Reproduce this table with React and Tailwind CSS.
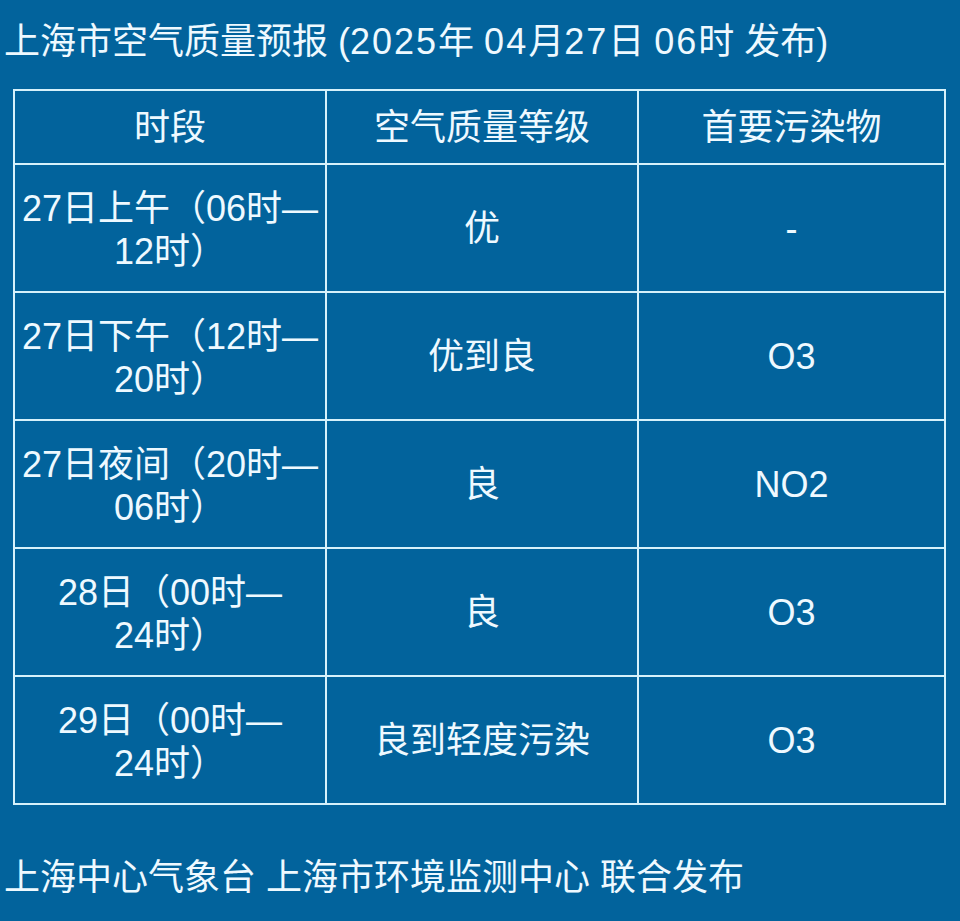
const rows = [
  { period: ['27日上午（06时—', '12时）'], level: '优', pollutant: '-' },
  { period: ['27日下午（12时—', '20时）'], level: '优到良', pollutant: 'O3' },
  { period: ['27日夜间（20时—', '06时）'], level: '良', pollutant: 'NO2' },
  { period: ['28日（00时—', '24时）'], level: '良', pollutant: 'O3' },
  { period: ['29日（00时—', '24时）'], level: '良到轻度污染', pollutant: 'O3' },
];

const cell = 'border-2 border-[#d6f1fb] font-normal text-center';

export default function App() {
  return (
    <div className="min-h-screen bg-[#02639c] text-[#eef9ff] font-['Liberation_Sans','Noto_Sans_CJK_SC',sans-serif] text-[36px] leading-[43px]">
      <div className="pt-5 pl-1 whitespace-nowrap">
        上海市空气质量预报 (<span className="tracking-[2px]">2025</span>年 <span className="tracking-[2px]">04</span>月<span className="tracking-[2px]">27</span>日 <span className="tracking-[2px]">06</span>时 发布)
      </div>

      <table className="mt-[26px] ml-[13px] w-[933px] table-fixed border-collapse border-2 border-[#d6f1fb]">
        <colgroup>
          <col className="w-[312px]" />
          <col className="w-[312px]" />
          <col />
        </colgroup>
        <thead>
          <tr className="h-[74px]">
            <th className={cell}>时段</th>
            <th className={cell}>空气质量等级</th>
            <th className={cell}>首要污染物</th>
          </tr>
        </thead>
        <tbody>
          {rows.map((r, i) => (
            <tr key={i} className="h-[128px]">
              <td className={cell + ' whitespace-nowrap'}>
                <div className="pt-[3px]">{r.period[0]}</div>
                <div>{r.period[1]}</div>
              </td>
              <td className={cell}>{r.level}</td>
              <td className={cell}>{r.pollutant}</td>
            </tr>
          ))}
        </tbody>
      </table>

      <div className="mt-[51px] pl-1 whitespace-nowrap">上海中心气象台 上海市环境监测中心 联合发布</div>
    </div>
  );
}
